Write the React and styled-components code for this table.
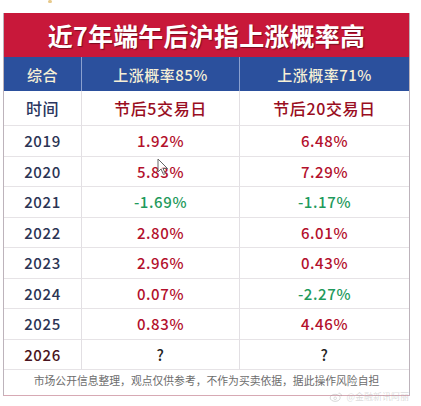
import React from "react";
import styled, { createGlobalStyle } from "styled-components";

const GlobalStyle = createGlobalStyle`
  html, body {
    margin: 0;
    padding: 0;
    background: #ffffff;
  }
  body {
    font-family: "Noto Sans CJK SC", "Noto Sans", sans-serif;
  }
`;

const rows = [
  { year: "2019", a: "1.92%", b: "6.48%" },
  { year: "2020", a: "5.83%", b: "7.29%" },
  { year: "2021", a: "-1.69%", b: "-1.17%" },
  { year: "2022", a: "2.80%", b: "6.01%" },
  { year: "2023", a: "2.96%", b: "0.43%" },
  { year: "2024", a: "0.07%", b: "-2.27%" },
  { year: "2025", a: "0.83%", b: "4.46%" },
];

const Page = styled.div`
  width: 421px;
  height: 406px;
  padding: 13px 0 0 3px;
  box-sizing: border-box;
  position: relative;
  overflow: hidden;
`;

const Card = styled.div`
  width: 407px;
  border-left: 1px solid #bdb3bb;
  border-right: 1px solid #bdb3bb;
  border-bottom: 1px solid #d7a9b4;
  box-sizing: border-box;
`;

const Title = styled.div`
  height: 44px;
  background: #c8183a;
  color: #ffffff;
  font-size: 25px;
  font-weight: 700;
  display: flex;
  align-items: center;
  justify-content: center;
  letter-spacing: 0.2px;
  text-shadow: 1px 1px 1px rgba(60, 0, 10, 0.55);
`;

const Grid = styled.div`
  display: grid;
  grid-template-columns: 78px 158px 169px;
`;

const HeadCell = styled.div`
  height: 34px;
  background: #2b509d;
  color: #f6efd6;
  font-size: 15px;
  font-weight: 500;
  display: flex;
  align-items: center;
  justify-content: center;
  border-right: ${(p) => (p.$last ? "none" : "1px solid #8aa0cf")};
  letter-spacing: 0.5px;
`;

const Cell = styled.div`
  height: ${(p) => (p.$tall ? "35px" : "30.5px")};
  box-sizing: border-box;
  display: flex;
  align-items: center;
  justify-content: center;
  font-size: ${(p) => (p.$tall ? "16px" : "15px")};
  font-weight: 500;
  color: ${(p) => p.$color};
  border-right: ${(p) => (p.$last ? "none" : "1px solid #e2dfe3")};
  border-bottom: 1px solid #e6e3e6;
  letter-spacing: 0.6px;
`;

const Footer = styled.div`
  height: 25px;
  display: flex;
  align-items: flex-start;
  justify-content: center;
  padding-top: 3px;
  box-sizing: border-box;
  font-size: 10.8px;
  line-height: 14px;
  color: #6d6d6d;
`;

const Watermark = styled.div`
  position: absolute;
  right: 12px;
  top: 392px;
  display: flex;
  align-items: center;
  gap: 3px;
  font-size: 9px;
  line-height: 10px;
  color: rgba(150, 150, 150, 0.35);
`;

const Cursor = styled.svg`
  position: absolute;
  left: 157px;
  top: 158px;
`;

const Spark = styled.div`
  position: absolute;
  left: 48px;
  top: 0;
  width: 4px;
  height: 3px;
  border-radius: 2px;
  background: #e7c98a;
`;

const valueColor = (v) => (v.startsWith("-") ? "#1f9a5c" : "#b3102c");

export default function App() {
  return (
    <Page>
      <GlobalStyle />
      <Spark />
      <Card>
        <Title>近7年端午后沪指上涨概率高</Title>
        <Grid>
          <HeadCell>综合</HeadCell>
          <HeadCell>上涨概率85%</HeadCell>
          <HeadCell $last>上涨概率71%</HeadCell>

          <Cell $tall $color="#2b3660">时间</Cell>
          <Cell $tall $color="#990d22">节后5交易日</Cell>
          <Cell $tall $last $color="#990d22">节后20交易日</Cell>

          {rows.map((r) => (
            <React.Fragment key={r.year}>
              <Cell $color="#2b3454">{r.year}</Cell>
              <Cell $color={valueColor(r.a)}>{r.a}</Cell>
              <Cell $last $color={valueColor(r.b)}>{r.b}</Cell>
            </React.Fragment>
          ))}

          <Cell $color="#4a1420">2026</Cell>
          <Cell $color="#222222">?</Cell>
          <Cell $last $color="#222222">?</Cell>
        </Grid>
        <Footer>市场公开信息整理，观点仅供参考，不作为买卖依据，据此操作风险自担</Footer>
      </Card>
      <Cursor width="12" height="18" viewBox="0 0 12 18">
        <path d="M1 1 L1 14 L4 11 L6.5 16.5 L8.5 15.5 L6 10.5 L10.5 10.5 Z" fill="#ffffff" fillOpacity="0.7" stroke="#666" strokeWidth="1" />
      </Cursor>
      <Watermark>
        <svg width="14" height="10" viewBox="0 0 16 12">
          <ellipse cx="7" cy="7" rx="6" ry="4.2" fill="none" stroke="rgba(150,150,150,0.45)" strokeWidth="1" />
          <circle cx="7" cy="7.5" r="1.6" fill="none" stroke="rgba(150,150,150,0.45)" strokeWidth="0.8" />
          <path d="M11 1.5 A3 3 0 0 1 14.5 5" fill="none" stroke="rgba(150,150,150,0.45)" strokeWidth="1" />
        </svg>
        <span>@金融新讯阿丽</span>
      </Watermark>
    </Page>
  );
}
